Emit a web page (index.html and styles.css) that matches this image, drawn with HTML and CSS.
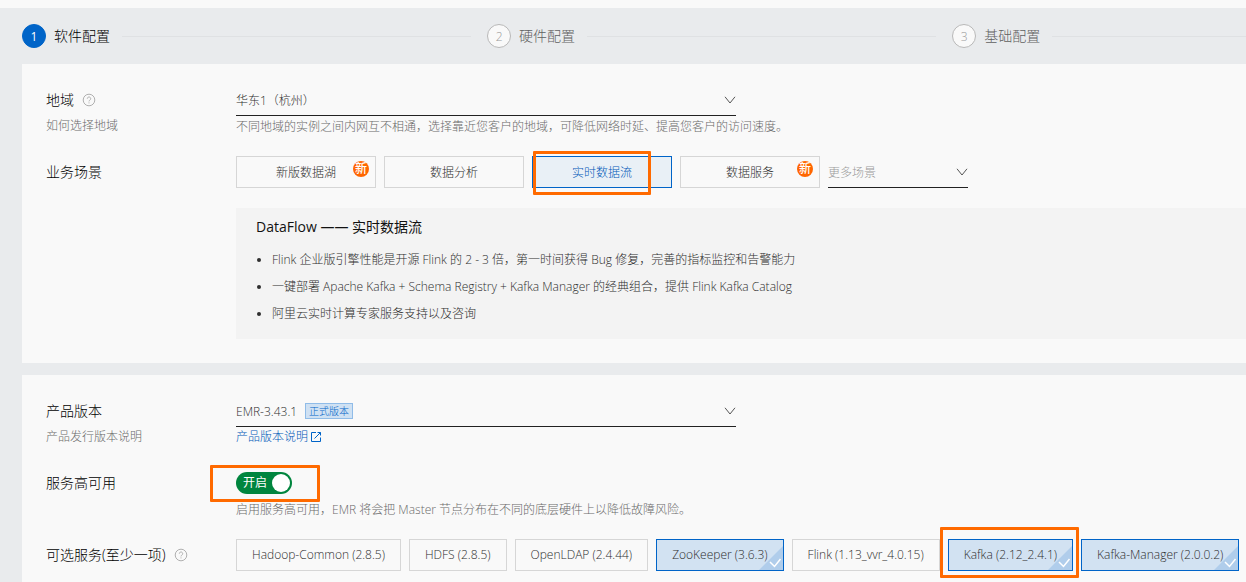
FILE: index.html
```html
<!DOCTYPE html>
<html lang="zh-CN">
<head>
<meta charset="utf-8">
<meta name="viewport" content="width=device-width, initial-scale=1">
<title>软件配置</title>
<link rel="stylesheet" href="styles.css">
</head>
<body>
<main class="page">
  <ol class="steps">
    <li class="step step-current"><span class="step-number">1</span><span class="step-name">软件配置</span></li>
    <li class="step"><span class="step-number">2</span><span class="step-name">硬件配置</span></li>
    <li class="step"><span class="step-number">3</span><span class="step-name">基础配置</span></li>
  </ol>

  <section class="card">
    <div class="row">
      <div class="row-head">
        <div class="row-title"><label for="region">地域</label>
          <svg class="help-icon" viewBox="0 0 14 14" aria-hidden="true"><circle cx="7" cy="7" r="5.8"/><path d="M5.3 5.7a1.7 1.7 0 1 1 2.6 1.4c-.6.4-.9.7-.9 1.3M7 9.4v1"/></svg>
        </div>
        <p class="hint">如何选择地域</p>
      </div>
      <div class="row-body">
        <div class="dropdown">
          <select id="region" class="select"><option>华东1（杭州）</option></select>
          <svg class="chevron" viewBox="0 0 12 8" aria-hidden="true"><path d="M1 .8 6 7l5-6.2"/></svg>
        </div>
        <p class="hint hint-below">不同地域的实例之间内网互不相通，选择靠近您客户的地域，可降低网络时延、提高您客户的访问速度。</p>
      </div>
    </div>

    <div class="row">
      <div class="row-head"><div class="row-title">业务场景</div></div>
      <div class="row-body">
        <div class="scenes">
          <label class="option scene"><input type="radio" name="scene"><span>新版数据湖</span><span class="badge">新</span></label>
          <label class="option scene"><input type="radio" name="scene"><span>数据分析</span></label>
          <label class="option scene scene-active"><input type="radio" name="scene" checked><span>实时数据流</span><i class="mark mark-scene"></i></label>
          <label class="option scene"><input type="radio" name="scene"><span>数据服务</span><span class="badge">新</span></label>
          <div class="dropdown dropdown-small">
            <select class="select select-empty" aria-label="更多场景"><option>更多场景</option></select>
            <svg class="chevron" viewBox="0 0 12 8" aria-hidden="true"><path d="M1 .8 6 7l5-6.2"/></svg>
          </div>
        </div>
        <div class="intro">
          <h2 class="intro-title"><span class="intro-name">DataFlow</span> —— 实时数据流</h2>
          <ul class="intro-list">
            <li>Flink 企业版引擎性能是开源 Flink 的 2 - 3 倍，第一时间获得 Bug 修复，完善的指标监控和告警能力</li>
            <li>一键部署 Apache Kafka + Schema Registry + Kafka Manager 的经典组合，提供 Flink Kafka Catalog</li>
            <li>阿里云实时计算专家服务支持以及咨询</li>
          </ul>
        </div>
      </div>
    </div>
  </section>

  <section class="card">
    <div class="row">
      <div class="row-head">
        <div class="row-title"><label for="version">产品版本</label></div>
        <p class="hint">产品发行版本说明</p>
      </div>
      <div class="row-body">
        <div class="dropdown">
          <select id="version" class="select"><option>EMR-3.43.1</option></select>
          <span class="tag">正式版本</span>
          <svg class="chevron" viewBox="0 0 12 8" aria-hidden="true"><path d="M1 .8 6 7l5-6.2"/></svg>
        </div>
        <a class="link" href="#">产品版本说明<svg class="link-icon" viewBox="0 0 12 12" aria-hidden="true"><path d="M6 1.500H1.500v9h9V6.500M7.500 1.500h3v3M10.500 1.500l-6 6"/></svg></a>
      </div>
    </div>

    <div class="row">
      <div class="row-head"><div class="row-title"><label for="ha">服务高可用</label></div></div>
      <div class="row-body">
        <div class="switch-line">
          <label class="switch"><input id="ha" type="checkbox" role="switch" checked><span>开启</span><i class="knob"></i><i class="mark mark-switch"></i></label>
        </div>
        <p class="hint hint-below">启用服务高可用，EMR 将会把 Master 节点分布在不同的底层硬件上以降低故障风险。</p>
      </div>
    </div>

    <div class="row">
      <div class="row-head">
        <div class="row-title">可选服务(至少一项)
          <svg class="help-icon" viewBox="0 0 14 14" aria-hidden="true"><circle cx="7" cy="7" r="5.8"/><path d="M5.3 5.7a1.7 1.7 0 1 1 2.6 1.4c-.6.4-.9.7-.9 1.3M7 9.4v1"/></svg>
        </div>
      </div>
      <div class="row-body services">
        <label class="option service"><input type="checkbox"><span>Hadoop-Common (2.8.5)</span></label>
        <label class="option service"><input type="checkbox"><span>HDFS (2.8.5)</span></label>
        <label class="option service"><input type="checkbox"><span>OpenLDAP (2.4.44)</span></label>
        <label class="option service service-on"><input type="checkbox" checked><span>ZooKeeper (3.6.3)</span><svg class="corner" viewBox="0 0 24 24" aria-hidden="true"><path class="corner-fill" d="M24 0v24H0z"/><path class="corner-tick" d="m11 16 4.500 4.500L21.500 13"/></svg></label>
        <label class="option service"><input type="checkbox"><span>Flink (1.13_vvr_4.0.15)</span></label>
        <label class="option service service-on"><input type="checkbox" checked><span>Kafka (2.12_2.4.1)</span><svg class="corner" viewBox="0 0 24 24" aria-hidden="true"><path class="corner-fill" d="M24 0v24H0z"/><path class="corner-tick" d="m11 16 4.500 4.500L21.500 13"/></svg><i class="mark mark-service"></i></label>
        <label class="option service service-on"><input type="checkbox" checked><span>Kafka-Manager (2.0.0.2)</span><svg class="corner" viewBox="0 0 24 24" aria-hidden="true"><path class="corner-fill" d="M24 0v24H0z"/><path class="corner-tick" d="m11 16 4.500 4.500L21.500 13"/></svg></label>
      </div>
    </div>
  </section>
</main>
</body>
</html>
```
FILE: styles.css
```css
* { box-sizing: border-box; }

body {
  margin: 0;
  padding-top: 8px;
  background: #f9f9f9;
  color: #2e2e2e;
  font: 300 12px/20px "Open Sans", "Noto Sans CJK SC", sans-serif;
  overflow: hidden;
}

p, h2, ul, ol { margin: 0; padding: 0; }

.page {
  display: flex;
  flex-direction: column;
  gap: 12px;
  min-height: 100vh;
  padding-left: 22px;
  background: #e9ebed;
}

/* Steps */
.steps {
  display: grid;
  grid-template-columns: 38% 38% 24%;
  height: 44px;
  padding-top: 16px;
  list-style: none;
}

.step {
  display: flex;
  align-items: center;
  height: 24px;
  gap: 8px;
  color: #606060;
  white-space: nowrap;
}

.step::after {
  content: "";
  flex: 1;
  height: 1px;
  margin: 0 16px 0 4px;
  background: #dfe1e3;
}

.step:last-child::after { margin-right: 0; }

.step-number {
  display: flex;
  align-items: center;
  justify-content: center;
  width: 24px;
  height: 24px;
  padding-top: 2px;
  border: 1px solid #b8b8b8;
  border-radius: 50%;
  background: #f9f9f9;
  color: #999;
}

.step-name { font-size: 14px; }
.step-current { color: #000; }

.step-current .step-number {
  border-color: #0064c8;
  background: #0064c8;
  color: #fff;
  font-weight: 400;
}

/* Cards and form rows */
.card {
  display: flex;
  flex-direction: column;
  gap: 20px;
  padding: 20px 0 24px 24px;
  background: #f9f9f9;
}

.card:last-child { flex: 1; padding-bottom: 0; }
.row { display: flex; }
.row-head { flex: 0 0 190px; }
.row-body { flex: 1; min-width: 0; }

.row-title {
  display: flex;
  align-items: center;
  gap: 8px;
  height: 32px;
  color: #000;
  font-size: 14px;
  white-space: nowrap;
}

.hint {
  height: 20px;
  color: #6a6a6a;
}

.hint-below { line-height: 22px; }

.help-icon {
  width: 14px;
  height: 14px;
  fill: none;
  stroke: #b0b0b0;
}

/* Dropdowns */
.dropdown {
  position: relative;
  max-width: 500px;
  height: 32px;
}

.dropdown-small { width: 140px; }

.select {
  width: 100%;
  height: 32px;
  padding: 2px 0 0;
  border: 0;
  border-bottom: 1px solid #222;
  border-radius: 0;
  background: none;
  color: #2e2e2e;
  font: inherit;
  appearance: none;
}

.select-empty { color: #999; }

.chevron {
  position: absolute;
  top: 12px;
  right: 0;
  width: 12px;
  height: 8px;
  fill: none;
  stroke: #555;
  pointer-events: none;
}

.tag {
  position: absolute;
  top: 8px;
  left: 69px;
  padding: 0 3px;
  border: 1px solid #90bce8;
  background: #cfe1f3;
  color: #0064c8;
  font-size: 10px;
  line-height: 14px;
}

.link {
  display: inline-flex;
  align-items: center;
  gap: 2px;
  color: #0058b8;
  line-height: 22px;
  text-decoration: none;
}

.row-body > .link {
  height: 20px;
  vertical-align: top;
}

.link-icon {
  width: 12px;
  height: 12px;
  fill: none;
  stroke: #0064c8;
}

/* Selectable boxes */
.option {
  position: relative;
  display: flex;
  align-items: center;
  justify-content: center;
  height: 32px;
  border: 1px solid #d6d6d6;
  white-space: nowrap;
}

.option input,
.switch input {
  position: absolute;
  inset: 0;
  margin: 0;
  opacity: 0;
}

.scenes {
  display: flex;
  gap: 8px;
}

.scene {
  width: 140px;
  padding-top: 2px;
}

.scene-active {
  border-color: #0064c8;
  background: #e9f0f6;
  color: #0058b8;
}

.badge {
  position: absolute;
  top: 4px;
  right: 6px;
  width: 16px;
  height: 16px;
  border-radius: 50%;
  background: #f60;
  color: #fff;
  font-size: 12px;
  font-weight: 500;
  line-height: 16px;
  text-align: center;
}

.intro {
  margin-top: 20px;
  padding: 8px 20px 12px;
  background: #f3f3f3;
}

.intro-title {
  color: #111;
  font-size: 14px;
  font-weight: 400;
  line-height: 22px;
}

.intro-name { font-weight: 500; }

.intro-list {
  margin-top: 8px;
  padding-left: 16px;
  line-height: 27px;
}

.services {
  display: flex;
  gap: 8px;
}

.service { padding: 0 15px; }

.service-on {
  border-color: #0064c8;
  background: #d2e2f2;
}

.corner {
  position: absolute;
  right: 0;
  bottom: 0;
  width: 24px;
  height: 24px;
}

.corner-fill { fill: #b0cdeb; }

.corner-tick {
  fill: none;
  stroke: #fff;
  stroke-width: 1.5;
}

.service span { position: relative; z-index: 1; }

/* Switch */
.switch-line {
  display: flex;
  align-items: center;
  height: 32px;
}

.switch {
  position: relative;
  display: flex;
  align-items: center;
  justify-content: space-between;
  width: 56px;
  height: 22px;
  padding: 0 2px 0 7px;
  border-radius: 11px;
  background: #00853e;
  color: #fff;
  font-weight: 400;
}

.knob {
  width: 18px;
  height: 18px;
  border-radius: 50%;
  background: #fff;
}

/* Highlight frames */
.mark {
  position: absolute;
  z-index: 1;
  border: 3px solid #ff6a00;
  border-radius: 1px;
  pointer-events: none;
}

.mark-scene { inset: -6px 20px -8px 0; }
.mark-switch { inset: -7px -28px -8px -26px; }
.mark-service { inset: -13px -7px -8px -9px; }
```
